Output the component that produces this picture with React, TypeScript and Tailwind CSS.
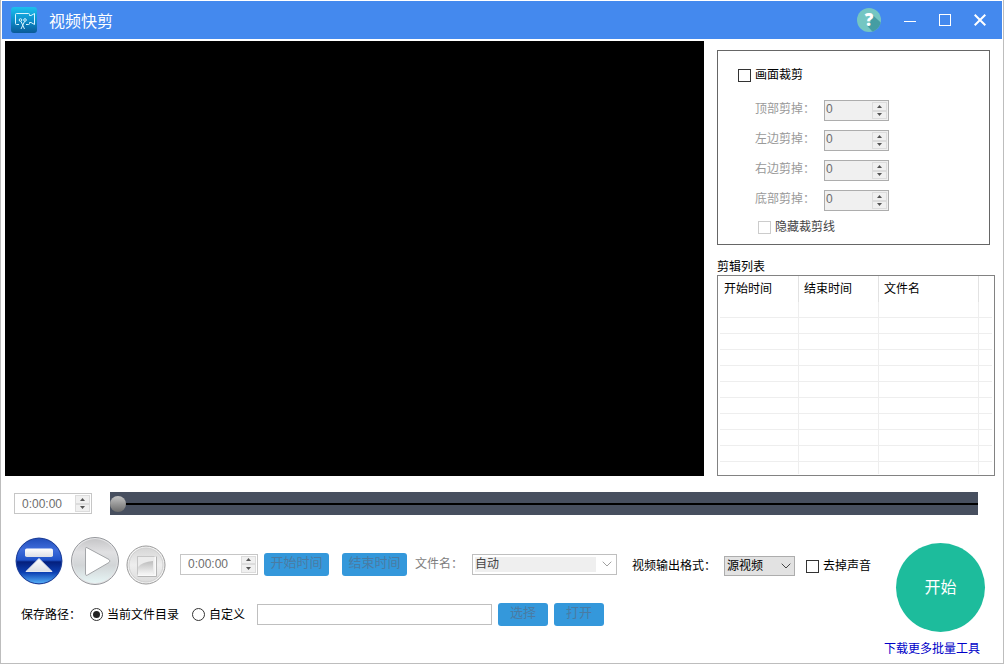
import React, { useState } from 'react';

interface SpinBoxProps {
  id: string;
  value: string;
  label?: string;
  className: string;
  inputClass: string;
}

const cropSides = [
  { id: 'crop-top', label: '顶部剪掉：' },
  { id: 'crop-left', label: '左边剪掉：' },
  { id: 'crop-right', label: '右边剪掉：' },
  { id: 'crop-bottom', label: '底部剪掉：' },
];

const emptyRows = Array.from({ length: 10 }, (_, i) => i);

const checkboxClass =
  'size-[13px] shrink-0 appearance-none border border-[#333] bg-white checked:bg-[#3498db] disabled:border-[#ccc]';

const radioClass =
  'size-[13px] shrink-0 appearance-none rounded-full border border-[#333] bg-clip-content p-[2px] checked:bg-[#222]';

const actionClass =
  'h-[23px] shrink-0 rounded-[3px] bg-[#3498db] pb-1 text-[13px] leading-[19px] text-[#4a7ba3]';

const SpinBox: React.FC<SpinBoxProps> = ({ id, value, label, className, inputClass }) => (
  <div className={`flex h-[21px] shrink-0 border p-px ${className}`}>
    <input
      id={id}
      type="text"
      defaultValue={value}
      disabled
      aria-label={label}
      className={`min-w-0 flex-1 bg-transparent text-[12px] text-[#6d6d6d] ${inputClass}`}
    />
    <div className="flex w-[15px] flex-col">
      <button
        type="button"
        disabled
        aria-label="增加"
        className="flex flex-1 items-center justify-center border border-[#dcdcdc] bg-[#f0f0f0]"
      >
        <svg width="5" height="3" viewBox="0 0 5 3">
          <path d="M0 3 2.5 0 5 3z" fill="#555" />
        </svg>
      </button>
      <button
        type="button"
        disabled
        aria-label="减少"
        className="flex flex-1 items-center justify-center border border-[#dcdcdc] bg-[#f0f0f0]"
      >
        <svg width="5" height="3" viewBox="0 0 5 3">
          <path d="M0 0h5L2.5 3z" fill="#555" />
        </svg>
      </button>
    </div>
  </div>
);

const Logo: React.FC = () => (
  <svg width="26" height="26" viewBox="0 0 26 26">
    <defs>
      <linearGradient id="logo-bg" x1="0" y1="0" x2="0" y2="1">
        <stop offset="0" stopColor="#1cc0ee" />
        <stop offset="0.5" stopColor="#0d90cc" />
        <stop offset="1" stopColor="#0a5a98" />
      </linearGradient>
    </defs>
    <rect width="26" height="26" rx="3" fill="url(#logo-bg)" />
    <g fill="none" stroke="#d8f4ff" strokeWidth="1">
      <path d="M8 17.500H5.500Q4.500 17.500 4.500 16.500V7.500Q4.500 6.500 5.500 6.500H17.500Q18.500 6.500 18.500 7.500V8.500L20 8.500 23.500 6.500V17.500L20 15.500H18.500V16.500Q18.500 17.500 17.500 17.500H15" />
      <path d="M10 14.500l3.500 7.500M13.500 14.500L10 22" />
      <circle cx="9.500" cy="13" r="1.300" />
      <circle cx="14" cy="13" r="1.300" />
    </g>
  </svg>
);

const HelpIcon: React.FC = () => (
  <svg width="24" height="24" viewBox="0 0 24 24">
    <defs>
      <clipPath id="help-clip">
        <circle cx="12" cy="12" r="12" />
      </clipPath>
    </defs>
    <circle cx="12" cy="12" r="12" fill="#74c6c2" />
    <path d="M14.500 6l12 11-9 9-7-8 3-4z" fill="#459da3" clipPath="url(#help-clip)" />
    <text
      x="12"
      y="18"
      textAnchor="middle"
      fill="#fff"
      fontSize="17"
      fontWeight="800"
      fontFamily="'Open Sans', sans-serif"
    >
      ?
    </text>
  </svg>
);

const OpenIcon: React.FC = () => (
  <svg width="48" height="48" viewBox="0 0 48 48">
    <defs>
      <linearGradient id="open-bg" x1="0" y1="0" x2="0" y2="1">
        <stop offset="0" stopColor="#1f4cba" />
        <stop offset="0.25" stopColor="#3f6ddb" />
        <stop offset="0.48" stopColor="#1f52c8" />
        <stop offset="0.52" stopColor="#041f7c" />
        <stop offset="0.75" stopColor="#0b3fb2" />
        <stop offset="1" stopColor="#58b4fa" />
      </linearGradient>
      <linearGradient id="open-fg" x1="0" y1="0" x2="0" y2="1">
        <stop offset="0" stopColor="#fff" />
        <stop offset="1" stopColor="#dcdfe6" />
      </linearGradient>
    </defs>
    <circle cx="24" cy="24" r="23.500" fill="#9fb0d8" />
    <circle cx="24" cy="24" r="22.800" fill="url(#open-bg)" stroke="#1a3c98" strokeWidth="1" />
    <rect x="10" y="11.500" width="28" height="8.500" rx="1.800" fill="url(#open-fg)" />
    <path
      d="M24 21.500 37 34.500H11z"
      fill="url(#open-fg)"
      stroke="#e6e9f0"
      strokeWidth="1"
      strokeLinejoin="round"
    />
  </svg>
);

const PlayIcon: React.FC = () => (
  <svg width="48" height="48" viewBox="0 0 48 48">
    <defs>
      <linearGradient id="play-bg" x1="0" y1="0" x2="0" y2="1">
        <stop offset="0" stopColor="#c6c6c8" />
        <stop offset="0.3" stopColor="#e0e0e2" />
        <stop offset="0.6" stopColor="#d2d5d7" />
        <stop offset="1" stopColor="#e6f5f5" />
      </linearGradient>
    </defs>
    <circle cx="24" cy="24" r="23.500" fill="#e4e4e6" stroke="#96989c" strokeWidth="1" />
    <circle cx="24" cy="24" r="22" fill="url(#play-bg)" />
    <path
      d="M14.500 11.500Q14.500 10 16 10.700L38 22.500Q40 24 38 25.500L16.500 38Q14.500 39 14.500 37.500z"
      fill="#fff"
      stroke="#a3a5a8"
      strokeWidth="1"
    />
  </svg>
);

const StopIcon: React.FC = () => (
  <svg width="40" height="40" viewBox="0 0 40 40">
    <defs>
      <linearGradient id="stop-bg" x1="0" y1="0" x2="0" y2="1">
        <stop offset="0" stopColor="#d6d6d6" />
        <stop offset="0.5" stopColor="#eeeeee" />
        <stop offset="1" stopColor="#dcdcdc" />
      </linearGradient>
      <linearGradient id="stop-fg" x1="0" y1="0" x2="0" y2="1">
        <stop offset="0" stopColor="#bdbdbd" />
        <stop offset="1" stopColor="#f4f4f4" />
      </linearGradient>
    </defs>
    <circle cx="20" cy="20" r="19" fill="#f4f4f4" stroke="#9a9a9a" strokeWidth="1" />
    <circle cx="20" cy="20" r="17" fill="url(#stop-bg)" stroke="#cfcfcf" strokeWidth="1" />
    <rect x="11.500" y="11.500" width="18" height="19" fill="#ececec" stroke="#c6c6c6" />
    <path d="M12 22Q16 17 27 16V29H12z" fill="url(#stop-fg)" />
    <path d="M11.500 30.500h18v-19" fill="none" stroke="#fafafa" strokeWidth="2" />
    <path d="M11.500 31.500h19v-20" fill="none" stroke="#b5b5b5" />
  </svg>
);

const Chevron: React.FC<{ color: string }> = ({ color }) => (
  <svg width="10" height="6" viewBox="0 0 10 6" fill="none" stroke={color}>
    <path d="M.700 .700 5 5 9.300 .700" />
  </svg>
);

const TitleBar: React.FC = () => (
  <header className="mx-px flex h-[38px] items-center bg-[#4489ee] pr-4 pl-[9px] text-white">
    <Logo />
    <h1 className="ml-3 flex-1 pt-[3px] text-[16px] leading-6">视频快剪</h1>
    <div className="flex items-center gap-[23px]">
      <button type="button" aria-label="帮助">
        <HelpIcon />
      </button>
      <button type="button" aria-label="最小化">
        <svg width="12" height="12" viewBox="0 0 12 12" stroke="#fff">
          <path d="M0 7.500h12" />
        </svg>
      </button>
      <button type="button" aria-label="最大化">
        <svg width="12" height="12" viewBox="0 0 12 12" fill="none" stroke="#fff">
          <rect x=".5" y=".5" width="11" height="11" />
        </svg>
      </button>
      <button type="button" aria-label="关闭">
        <svg width="12" height="12" viewBox="0 0 12 12" stroke="#fff" strokeWidth="2">
          <path d="M.700 .700l10.600 10.600M11.300 .700.700 11.300" />
        </svg>
      </button>
    </div>
  </header>
);

const CropPanel: React.FC = () => (
  <section className="mr-[5px] h-[195px] shrink-0 border border-[#666] pt-4 pl-5">
    <label className="flex h-4 items-center gap-1 text-black">
      <input type="checkbox" className={checkboxClass} />
      画面裁剪
    </label>
    <div className="mt-[17px] flex flex-col gap-[9px] pl-[17px]">
      {cropSides.map(side => (
        <div key={side.id} className="flex h-[21px]">
          <label htmlFor={side.id} className="w-[69px] leading-[18px] text-[#9a9a9a]">
            {side.label}
          </label>
          <SpinBox
            id={side.id}
            value="0"
            className="w-[65px] border-[#adadad] bg-[#f0f0f0]"
            inputClass="self-start leading-[14px]"
          />
        </div>
      ))}
    </div>
    <label className="mt-2 ml-5 flex h-4 items-center gap-1 text-[#444]">
      <input type="checkbox" disabled className={checkboxClass} />
      隐藏裁剪线
    </label>
  </section>
);

const ClipList: React.FC = () => (
  <section className="mt-3 flex flex-1 flex-col">
    <h2 className="h-[18px] leading-5 text-black">剪辑列表</h2>
    <div className="flex-1 border border-[#828282] px-[2px]">
      <table className="w-full table-fixed border-separate border-spacing-0 text-left leading-[26px] text-black">
        <thead>
          <tr className="h-[25px]">
            <th className="w-[79px] border-r border-[#e2e2e2] p-0 pl-1 font-normal">开始时间</th>
            <th className="w-20 border-r border-[#e2e2e2] p-0 pl-[5px] font-normal">结束时间</th>
            <th className="w-[100px] border-r border-[#e2e2e2] p-0 pl-[5px] font-normal">文件名</th>
            <th className="p-0" />
          </tr>
        </thead>
        <tbody>
          {emptyRows.map(row => (
            <tr key={row} className="h-4">
              <td className="border-r border-b border-[#eee] p-0" />
              <td className="border-r border-b border-[#eee] p-0" />
              <td className="border-r border-b border-[#eee] p-0" />
              <td className="border-b border-[#eee] p-0" />
            </tr>
          ))}
          <tr className="h-3">
            <td className="border-r border-[#eee] p-0" />
            <td className="border-r border-[#eee] p-0" />
            <td className="border-r border-[#eee] p-0" />
            <td className="p-0" />
          </tr>
        </tbody>
      </table>
    </div>
  </section>
);

const Timeline: React.FC = () => {
  const [position, setPosition] = useState(0);

  return (
    <div className="flex items-center gap-[18px] pr-[25px] pl-[13px]">
      <SpinBox
        id="position"
        value="0:00:00"
        label="当前位置"
        className="w-[78px] border-[#c6c6c6] bg-white"
        inputClass="pl-[6px] leading-4"
      />
      <input
        type="range"
        min={0}
        max={100}
        value={position}
        onChange={e => setPosition(Number(e.target.value))}
        aria-label="播放进度"
        className="h-[23px] min-w-0 flex-1 appearance-none bg-[#474f5f] bg-[linear-gradient(#000,#000)] bg-[length:100%_2px] bg-center bg-no-repeat [&::-webkit-slider-thumb]:size-4 [&::-webkit-slider-thumb]:appearance-none [&::-webkit-slider-thumb]:rounded-full [&::-webkit-slider-thumb]:bg-linear-to-b [&::-webkit-slider-thumb]:from-[#c4c4c4] [&::-webkit-slider-thumb]:to-[#6c6c6c]"
      />
    </div>
  );
};

const ClipControls: React.FC = () => (
  <div className="flex items-center">
    <button type="button" aria-label="打开视频" className="shrink-0">
      <OpenIcon />
    </button>
    <button type="button" aria-label="播放" className="ml-2 shrink-0">
      <PlayIcon />
    </button>
    <button type="button" aria-label="停止" className="ml-[7px] shrink-0 pt-2">
      <StopIcon />
    </button>
    <div className="ml-[14px] flex items-center pt-[6px]">
      <SpinBox
        id="mark"
        value="0:00:00"
        label="标记时间"
        className="w-[78px] border-[#c6c6c6] bg-white"
        inputClass="pl-[6px] leading-4"
      />
      <button type="button" disabled className={`${actionClass} ml-[6px] w-[65px]`}>
        开始时间
      </button>
      <button type="button" disabled className={`${actionClass} ml-[13px] w-[65px]`}>
        结束时间
      </button>
      <label htmlFor="file-name" className="ml-2 w-[57px] shrink-0 text-[#7d7d7d]">
        文件名：
      </label>
      <div className="flex h-[21px] w-[145px] shrink-0 items-center border border-[#bfbfbf] bg-white p-[2px] pr-1">
        <select
          id="file-name"
          disabled
          className="h-[15px] min-w-0 flex-1 appearance-none bg-[#efefef] leading-[15px] text-[#444] opacity-100"
        >
          <option>自动</option>
        </select>
        <span className="ml-[6px]">
          <Chevron color="#a0a0a0" />
        </span>
      </div>
    </div>
    <div className="ml-[15px] flex items-center pt-[10px] text-black">
      <label htmlFor="format" className="w-[92px] shrink-0">
        视频输出格式：
      </label>
      <div className="relative shrink-0">
        <select
          id="format"
          className="block h-5 w-[71px] appearance-none border border-[#adadad] bg-[#e2e2e2] pl-[2px] leading-[18px]"
        >
          <option>源视频</option>
        </select>
        <span className="pointer-events-none absolute top-[7px] right-1">
          <Chevron color="#444" />
        </span>
      </div>
      <label className="ml-[11px] flex shrink-0 items-center gap-1">
        <input type="checkbox" className={checkboxClass} />
        去掉声音
      </label>
    </div>
  </div>
);

const SavePath: React.FC = () => (
  <div className="mt-[18px] flex items-center pl-[6px] text-black">
    <span className="w-[69px] shrink-0">保存路径：</span>
    <label className="flex shrink-0 items-center gap-1">
      <input type="radio" name="save" defaultChecked className={radioClass} />
      当前文件目录
    </label>
    <label className="ml-[13px] flex shrink-0 items-center gap-1">
      <input type="radio" name="save" className={radioClass} />
      自定义
    </label>
    <input
      type="text"
      disabled
      aria-label="自定义路径"
      className="ml-3 h-[21px] w-[235px] border border-[#bfbfbf] bg-white px-1"
    />
    <button type="button" disabled className={`${actionClass} ml-[6px] w-[50px]`}>
      选择
    </button>
    <button type="button" disabled className={`${actionClass} ml-[6px] w-[50px]`}>
      打开
    </button>
  </div>
);

export default function App() {
  return (
    <div className="flex min-h-screen flex-col border-x border-b border-[#bdbdbd] bg-white pt-px font-['Liberation_Sans','Noto_Sans_CJK_SC',sans-serif] text-[12px] leading-4">
      <TitleBar />
      <main className="flex flex-1 flex-col">
        <div className="flex flex-1 gap-[13px] pt-[2px] pr-2 pl-1">
          <div className="flex-1 bg-black" />
          <aside className="flex w-[278px] shrink-0 flex-col pt-[9px]">
            <CropPanel />
            <ClipList />
          </aside>
        </div>
        <div className="pt-4 pb-[6px]">
          <Timeline />
          <div className="mt-[22px] flex justify-between pr-[18px] pl-[14px]">
            <div>
              <ClipControls />
              <SavePath />
            </div>
            <div className="flex flex-col items-end pt-[6px]">
              <button
                type="button"
                className="size-[89px] rounded-full bg-[#1dbc9c] text-[16px] text-white"
              >
                开始
              </button>
              <a href="#more" className="mt-[9px] pr-[5px] text-[#0000c8]">
                下载更多批量工具
              </a>
            </div>
          </div>
        </div>
      </main>
    </div>
  );
}
